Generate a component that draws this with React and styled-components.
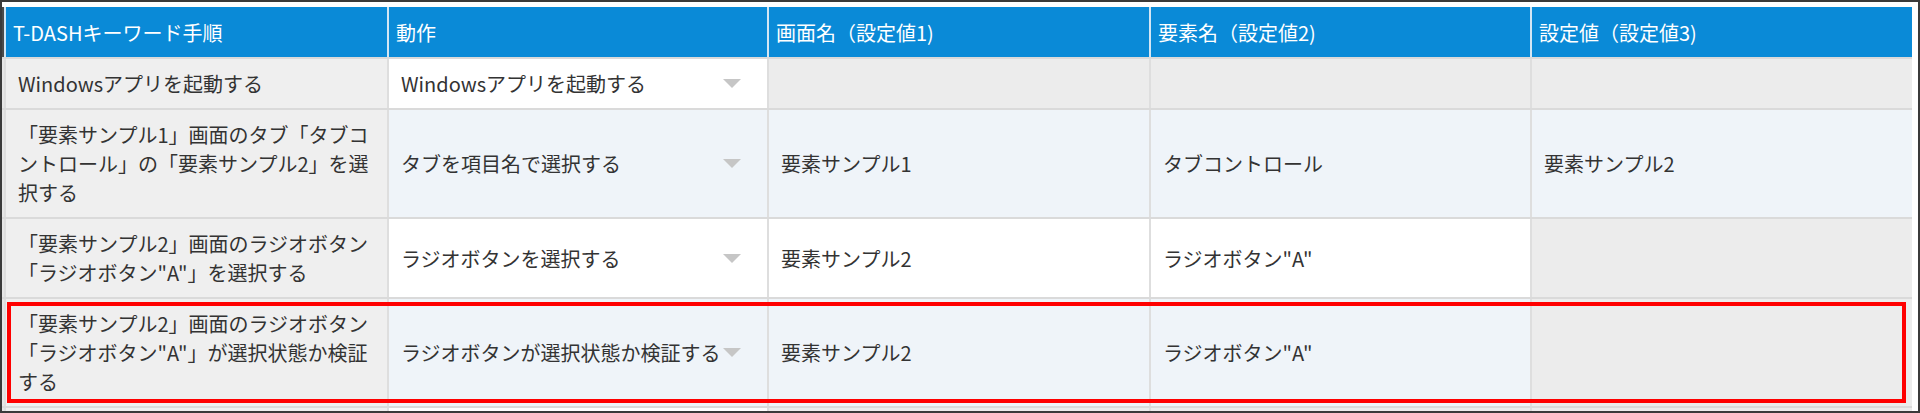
import React from "react";
import styled, { createGlobalStyle } from "styled-components";

const GlobalStyle = createGlobalStyle`
  html, body {
    margin: 0;
    padding: 0;
    background: #ffffff;
  }
  body {
    font-family: "Noto Sans CJK JP", "Noto Sans", sans-serif;
  }
`;

const COLUMNS = "2px 381px 378px 380px 379px 380px";

const headers = [
  "T-DASHキーワード手順",
  "動作",
  "画面名（設定値1)",
  "要素名（設定値2)",
  "設定値（設定値3)",
];

const rows = [
  {
    keyword: "Windowsアプリを起動する",
    action: "Windowsアプリを起動する",
    values: [null, null, null],
    tone: "white",
  },
  {
    keyword:
      "「要素サンプル1」画面のタブ「タブコントロール」の「要素サンプル2」を選択する",
    action: "タブを項目名で選択する",
    values: ["要素サンプル1", "タブコントロール", "要素サンプル2"],
    tone: "blue",
  },
  {
    keyword: "「要素サンプル2」画面のラジオボタン「ラジオボタン\"A\"」を選択する",
    action: "ラジオボタンを選択する",
    values: ["要素サンプル2", "ラジオボタン\"A\"", null],
    tone: "white",
  },
  {
    keyword:
      "「要素サンプル2」画面のラジオボタン「ラジオボタン\"A\"」が選択状態か検証する",
    action: "ラジオボタンが選択状態か検証する",
    values: ["要素サンプル2", "ラジオボタン\"A\"", null],
    tone: "blue",
    highlight: true,
  },
  {
    keyword: "",
    action: null,
    values: [null, null, null],
    tone: "white",
    stub: true,
  },
];

const toneColor = {
  white: "#ffffff",
  blue: "#eff4f9",
  off: "#ececec",
};

const App = () => {
  return (
    <>
      <GlobalStyle />
      <Frame>
        <Table>
          <Row $head>
            <Gutter $head />
            {headers.map((h) => (
              <HeadCell key={h}>{h}</HeadCell>
            ))}
          </Row>
          {rows.map((r, i) => (
            <Row key={i} $stub={r.stub}>
              <Gutter />
              <KeywordCell>{r.keyword}</KeywordCell>
              <ActionCell $tone={r.tone}>
                {r.action && (
                  <>
                    <ActionText>{r.action}</ActionText>
                    <Caret />
                  </>
                )}
              </ActionCell>
              {r.values.map((v, j) => (
                <ValueCell key={j} $tone={v === null ? "off" : r.tone}>
                  {v}
                </ValueCell>
              ))}
              {r.highlight && <Highlight />}
            </Row>
          ))}
        </Table>
      </Frame>
    </>
  );
};

export default App;

const Frame = styled.div`
  box-sizing: border-box;
  width: 1920px;
  height: 413px;
  border: 2px solid #3a3a3a;
  padding: 5px 6px 0 0;
  overflow: hidden;
  background: #ffffff;
`;

const Table = styled.div`
  display: flex;
  flex-direction: column;
  gap: 2px;
  background: #dadada;
`;

const Row = styled.div`
  position: relative;
  display: grid;
  grid-template-columns: ${COLUMNS};
  column-gap: 2px;
  height: ${(p) => (p.$head ? "50px" : "auto")};
  min-height: ${(p) => (p.$stub ? "40px" : "0")};
  background: ${(p) => (p.$head ? "#d3e6f4" : "#dedede")};
`;

const Gutter = styled.div`
  background: ${(p) => (p.$head ? "#4a4a4a" : "#e6e6e6")};
`;

const HeadCell = styled.div`
  display: flex;
  align-items: center;
  padding: 0 7px;
  background: #0a8ad7;
  color: #ffffff;
  font-size: 20px;
  line-height: 29px;
  white-space: nowrap;
`;

const Cell = styled.div`
  box-sizing: border-box;
  display: flex;
  align-items: center;
  padding: 10px 12px;
  font-size: 20px;
  line-height: 29px;
  color: #333333;
`;

const KeywordCell = styled(Cell)`
  background: #efefef;
  word-break: break-all;
`;

const ActionCell = styled(Cell)`
  justify-content: space-between;
  background: ${(p) => toneColor[p.$tone]};
`;

const ActionText = styled.span`
  white-space: nowrap;
`;

const Caret = styled.span`
  flex-shrink: 0;
  width: 0;
  height: 0;
  margin-right: 14px;
  border-left: 9px solid transparent;
  border-right: 9px solid transparent;
  border-top: 9px solid #c6c6c6;
`;

const ValueCell = styled(Cell)`
  background: ${(p) => toneColor[p.$tone]};
  white-space: nowrap;
`;

const Highlight = styled.div`
  position: absolute;
  top: 3px;
  bottom: 3px;
  left: 5px;
  right: 6px;
  border: 4px solid #ff0000;
  pointer-events: none;
`;
